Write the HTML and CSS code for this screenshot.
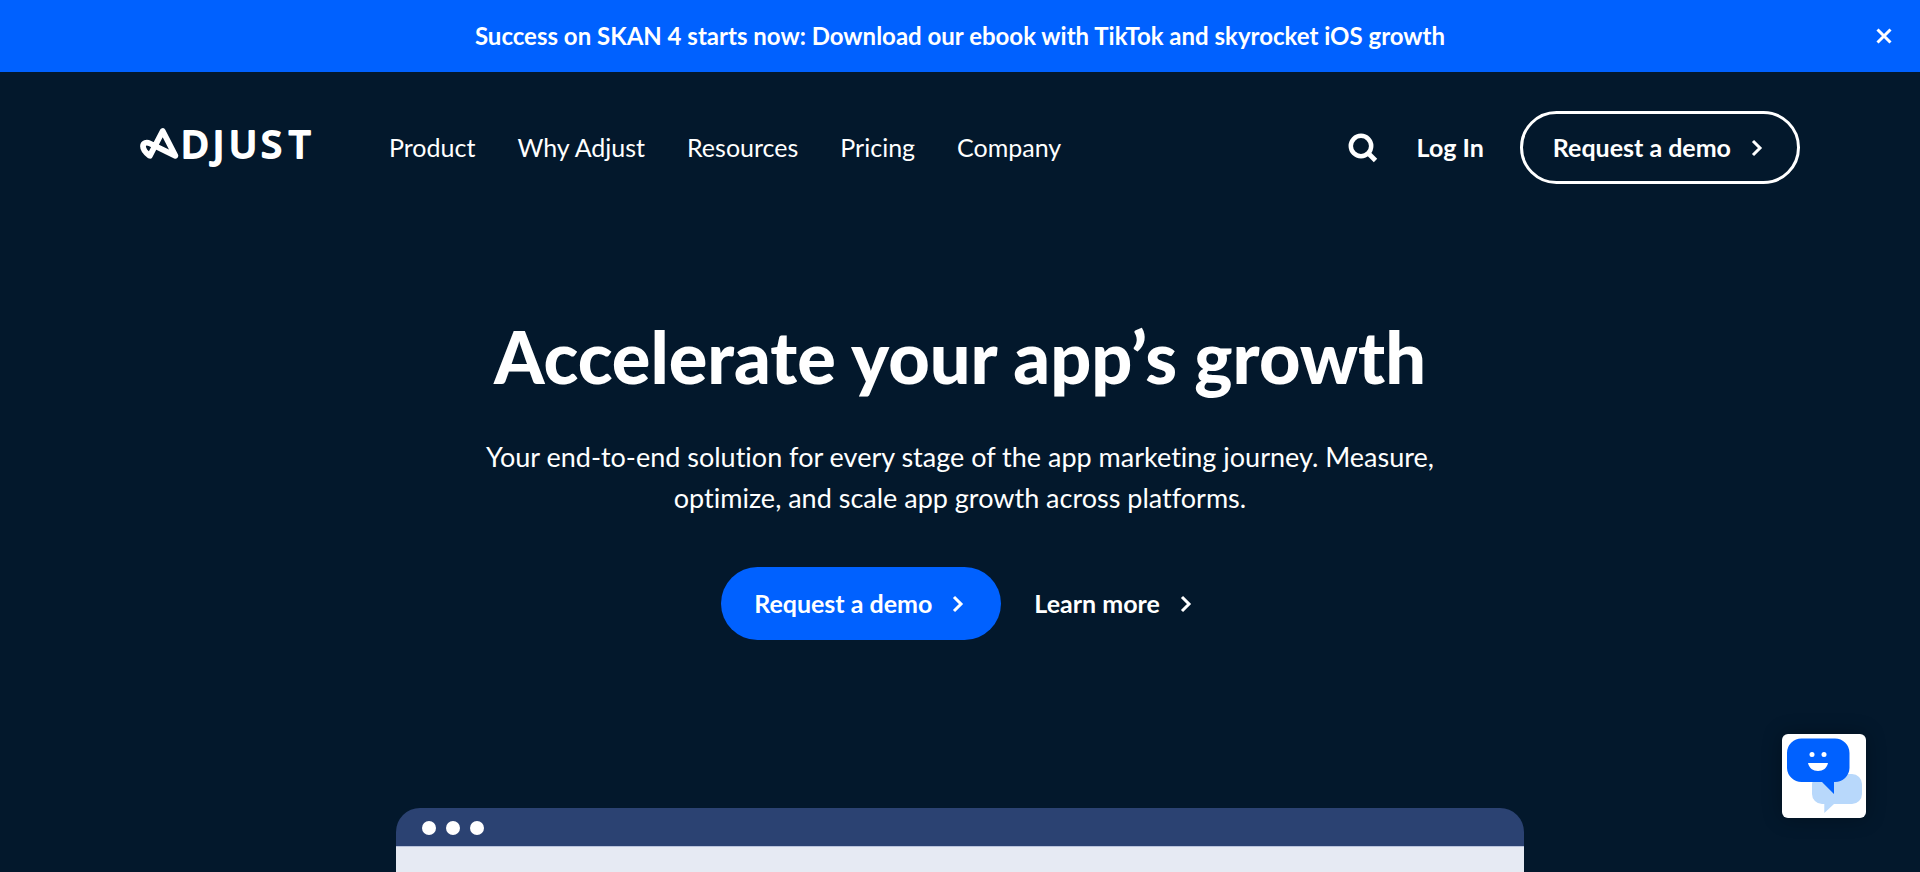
FILE: index.html
```html
<!DOCTYPE html>
<html lang="en">
<head>
<meta charset="utf-8">
<meta name="viewport" content="width=device-width, initial-scale=1">
<title>Adjust</title>
<link rel="stylesheet" href="styles.css">
</head>
<body>
<div class="banner">
  <a class="banner-link" href="#">Success on SKAN 4 starts now: Download our ebook with TikTok and skyrocket iOS growth</a>
  <button class="banner-close" type="button" aria-label="Close">
    <svg width="16" height="16" viewBox="0 0 16 16" aria-hidden="true"><path d="M1.5 1.5l13 13M14.5 1.5l-13 13" fill="none" stroke="currentColor" stroke-width="3"/></svg>
  </button>
</div>
<header class="header">
  <a class="logo" href="#" aria-label="Adjust">
    <svg width="174" height="62" viewBox="0 -10 174 62" aria-hidden="true">
      <path d="M22.7 4L9.8 28.800C6 26 3 22.500 3 19.200C3 15.800 6.500 14.800 10 16.500L35.400 28.800Z" fill="none" stroke="#fff" stroke-width="5.800" stroke-linejoin="round"/>
      <text class="logo-text" x="41 73 89 121 149" y="31">DJUST</text>
    </svg>
  </a>
  <nav class="nav" aria-label="Main">
    <a href="#">Product</a>
    <a href="#">Why Adjust</a>
    <a href="#">Resources</a>
    <a href="#">Pricing</a>
    <a href="#">Company</a>
  </nav>
  <div class="actions">
    <button class="search" type="button" aria-label="Search">
      <svg width="30" height="30" viewBox="0 0 30 30" aria-hidden="true"><circle cx="13" cy="13" r="10.200" fill="none" stroke="currentColor" stroke-width="4.500"/><path d="M20 20l7.500 7.500" stroke="currentColor" stroke-width="4.800"/></svg>
    </button>
    <a class="login" href="#">Log In</a>
    <a class="button button-outline" href="#">Request a demo
      <svg class="chevron" width="12" height="18" viewBox="0 0 12 18" aria-hidden="true"><path d="M2 2l7 7-7 7" fill="none" stroke="currentColor" stroke-width="3"/></svg>
    </a>
  </div>
</header>
<main class="hero">
  <h1 class="title">Accelerate your app’s growth</h1>
  <p class="lead">Your end-to-end solution for every stage of the app marketing journey. Measure, optimize, and scale app growth across platforms.</p>
  <div class="cta">
    <a class="button button-primary" href="#">Request a demo
      <svg class="chevron" width="12" height="18" viewBox="0 0 12 18" aria-hidden="true"><path d="M2 2l7 7-7 7" fill="none" stroke="currentColor" stroke-width="3"/></svg>
    </a>
    <a class="button button-text" href="#">Learn more
      <svg class="chevron" width="12" height="18" viewBox="0 0 12 18" aria-hidden="true"><path d="M2 2l7 7-7 7" fill="none" stroke="currentColor" stroke-width="3"/></svg>
    </a>
  </div>
  <div class="window">
    <div class="window-bar"><span class="dot"></span><span class="dot"></span><span class="dot"></span></div>
    <div class="window-body"></div>
  </div>
</main>
<button class="chat" type="button" aria-label="Open chat">
  <svg width="84" height="84" viewBox="0 0 84 84" aria-hidden="true">
    <path d="M40 40H70a10 10 0 0 1 10 10v10a10 10 0 0 1-10 10H52l-9.700 9V70H40a10 10 0 0 1-10-10V50a10 10 0 0 1 10-10z" fill="#b8d8fb"/>
    <path d="M20 4.500H53a14.500 14.500 0 0 1 14.500 14.500V34A14.500 14.500 0 0 1 53 48H52V60L40 48H20A14.500 14.500 0 0 1 5 34V19A14.500 14.500 0 0 1 20 4.500z" fill="#0061ff"/>
    <circle cx="30" cy="20.500" r="2.500" fill="#fff"/><circle cx="42" cy="20.500" r="2.500" fill="#fff"/>
    <path d="M26 29H46C45 34 41 37 36 37S27 34 26 29z" fill="#fff"/>
  </svg>
</button>
</body>
</html>
```
FILE: styles.css
```css
* { box-sizing: border-box; }
body {
  margin: 0;
  height: 100vh;
  overflow: hidden;
  display: flex;
  flex-direction: column;
  background: #03182c;
  color: #fff;
  font-family: Lato, sans-serif;
  font-size: 25px;
  font-variant-ligatures: none;
  line-height: 32px;
}
a { color: inherit; text-decoration: none; }
button { padding: 0; border: 0; background: none; color: inherit; cursor: pointer; }
svg { display: block; }

.banner {
  position: relative;
  display: flex;
  justify-content: center;
  padding: 20px 72px;
  background: #0061ff;
}
.banner-link { font-size: 24px; font-weight: 700; }
.banner-close { position: absolute; right: 28px; top: 28px; }

.header {
  display: flex;
  align-items: center;
  padding: 39px 120px 0 140px;
}
.logo { margin-right: 75px; }
.logo-text {
  font-family: "Noto Sans", sans-serif;
  font-size: 38px;
  font-weight: 500;
  fill: #fff;
  stroke: #fff;
  stroke-width: 2px;
  stroke-linejoin: round;
}
.nav { display: flex; gap: 42px; padding-bottom: 2px; }
.actions { display: flex; align-items: center; margin-left: auto; }
.search { margin-right: 39px; }
.login { margin-right: 36px; padding-bottom: 2px; font-weight: 700; }

.button {
  display: inline-flex;
  align-items: center;
  gap: 20px;
  padding: 17px 34px 18px 30px;
  border: 3px solid transparent;
  border-radius: 37px;
  font-weight: 700;
  line-height: 32px;
}
.chevron { margin-top: 1px; }
.button-outline { border-color: #fff; }
.button-primary { background: #0061ff; }
.button-text { padding-right: 4px; }

.hero {
  flex: 1;
  display: flex;
  flex-direction: column;
  align-items: center;
}
.title {
  margin: 130px 0 0;
  font-size: 72px;
  font-weight: 900;
  line-height: 84px;
}
.lead {
  max-width: 980px;
  margin: 38px 0 0;
  font-size: 27px;
  line-height: 41px;
  text-align: center;
}
.cta { display: flex; margin-top: 49px; }
.window {
  flex: 1;
  display: flex;
  flex-direction: column;
  width: 1128px;
  max-width: 100%;
  margin-top: 168px;
  border-radius: 24px 24px 0 0;
  overflow: hidden;
}
.window-bar {
  display: flex;
  align-items: center;
  gap: 10px;
  height: 39px;
  padding: 2px 26px 0;
  border-bottom: 1px solid #b9c3dc;
  background: #2b4272;
}
.dot { width: 14px; height: 14px; border-radius: 50%; background: #fff; }
.window-body { flex: 1; background: #e6eaf3; }

.chat {
  position: fixed;
  right: 54px;
  bottom: 54px;
  border-radius: 6px;
  background: #fff;
  box-shadow: 0 0 20px rgba(0, 0, 0, 0.3);
}
```
